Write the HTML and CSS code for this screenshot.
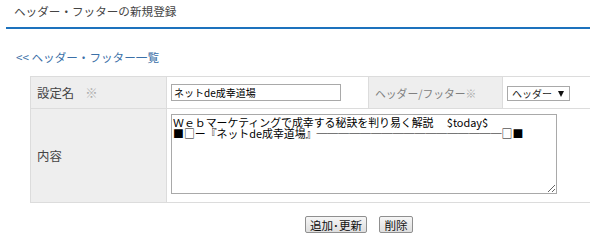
FILE: index.html
```html
<!DOCTYPE html>
<html lang="ja">
<head>
<meta charset="utf-8">
<title>ヘッダー・フッターの新規登録</title>
<link rel="stylesheet" href="styles.css">
</head>
<body>
<h1 class="page-title">ヘッダー・フッターの新規登録</h1>
<a class="back-link" href="#">&lt;&lt; ヘッダー・フッター一覧</a>
<form class="form">
<table class="form-table">
<tr class="row-name">
<th class="label">設定名<span class="req">※</span></th>
<td class="field field-name"><input class="text-input" type="text" value="ネットde成幸道場"></td>
<th class="label label-type">ヘッダー/フッター<span class="req">※</span></th>
<td class="field field-type"><span class="select-wrap"><select class="select"><option>ヘッダー</option><option>フッター</option></select></span></td>
</tr>
<tr class="row-content">
<th class="label">内容</th>
<td class="field field-content" colspan="3"><textarea class="content-area">Ｗｅｂマーケティングで成幸する秘訣を判り易く解説　 $today$
■□ー『ネットde成幸道場』─────────────────□■</textarea></td>
</tr>
</table>
<div class="actions">
<button class="btn btn-save" type="button">追加･更新</button>
<button class="btn btn-delete" type="button">削除</button>
</div>
</form>
</body>
</html>
```

FILE: styles.css
```css
html, body {
  margin: 0;
  padding: 0;
  overflow: hidden;
  background: #ffffff;
}

body {
  font-family: "Noto Sans CJK JP", "Noto Sans", sans-serif;
  font-size: 11.6px;
  color: #333333;
}

.page-title {
  margin: 0 0 0 6px;
  padding: 3px 0 0 8px;
  height: 24px;
  font-size: 11.6px;
  line-height: 16px;
  font-weight: normal;
  color: #444444;
  border-bottom: 2px solid #1d72bd;
}

.back-link {
  display: block;
  margin: 20px 0 0 16px;
  font-size: 11.6px;
  line-height: 16px;
  color: #3b70a8;
  text-decoration: none;
}

.form {
  margin: 11px 0 0 30px;
}

.form-table {
  border-collapse: collapse;
  width: 566px;
}

.form-table th,
.form-table td {
  border: 1px solid #dcdcdc;
  padding: 0;
  vertical-align: middle;
  text-align: left;
}

.label {
  background: #eeeeee;
  font-weight: normal;
  font-size: 12.4px;
  color: #444444;
  padding-left: 6px !important;
  width: 129px;
}

.label-type {
  color: #808080;
  font-size: 10.8px;
  width: 127px;
}

.req {
  color: #aaaaaa;
  margin-left: 11px;
}

.label-type .req {
  margin-left: 0;
}

.row-name th,
.row-name td {
  height: 31px;
}

.field-name {
  width: 197px;
  padding-left: 4px !important;
}

.field-type {
  padding-left: 4px !important;
}

.text-input {
  box-sizing: border-box;
  width: 170px;
  height: 17px;
  margin: 0;
  padding: 0 2px;
  border: 1px solid #a9a9a9;
  font-family: "Noto Sans CJK JP", sans-serif;
  font-size: 10px;
  line-height: 15px;
  color: #000000;
  display: block;
}

.select-wrap {
  position: relative;
  display: inline-block;
  margin-top: 1px;
}

.select-wrap::after {
  content: "";
  position: absolute;
  right: 6px;
  top: 5px;
  width: 0;
  height: 0;
  border-left: 3px solid transparent;
  border-right: 3px solid transparent;
  border-top: 6px solid #111111;
  pointer-events: none;
}

.select {
  -webkit-appearance: none;
  appearance: none;
  box-sizing: border-box;
  width: 63px;
  height: 15px;
  margin: 0;
  padding: 0 0 0 4px;
  border: 1px solid #a9a9a9;
  border-radius: 0;
  background: #ffffff;
  font-family: "Noto Sans CJK JP", sans-serif;
  font-size: 10px;
  line-height: 13px;
  color: #222222;
  display: block;
}

.row-content th,
.row-content td {
  height: 88px;
}

.field-content {
  padding: 5px 0 0 4px !important;
  vertical-align: top !important;
}

.content-area {
  box-sizing: border-box;
  display: block;
  width: 386px;
  height: 80px;
  margin: 0;
  padding: 2px 1px;
  border: 1px solid #a9a9a9;
  font-family: "Noto Sans CJK JP", sans-serif;
  font-size: 10.9px;
  line-height: 10.5px;
  color: #000000;
  white-space: pre;
  overflow: hidden;
  resize: both;
}

.actions {
  display: flex;
  gap: 12px;
  margin-top: 13px;
  padding-left: 275px;
}

.btn {
  box-sizing: border-box;
  height: 17px;
  margin: 0;
  padding: 0;
  border: 1px solid #8f8f8f;
  border-radius: 2px;
  background: linear-gradient(#f6f6f6, #dedede);
  font-family: "Noto Sans CJK JP", sans-serif;
  font-size: 11.6px;
  line-height: 14px;
  color: #111111;
}

.btn-save {
  width: 62px;
}

.btn-delete {
  width: 34px;
}
```
